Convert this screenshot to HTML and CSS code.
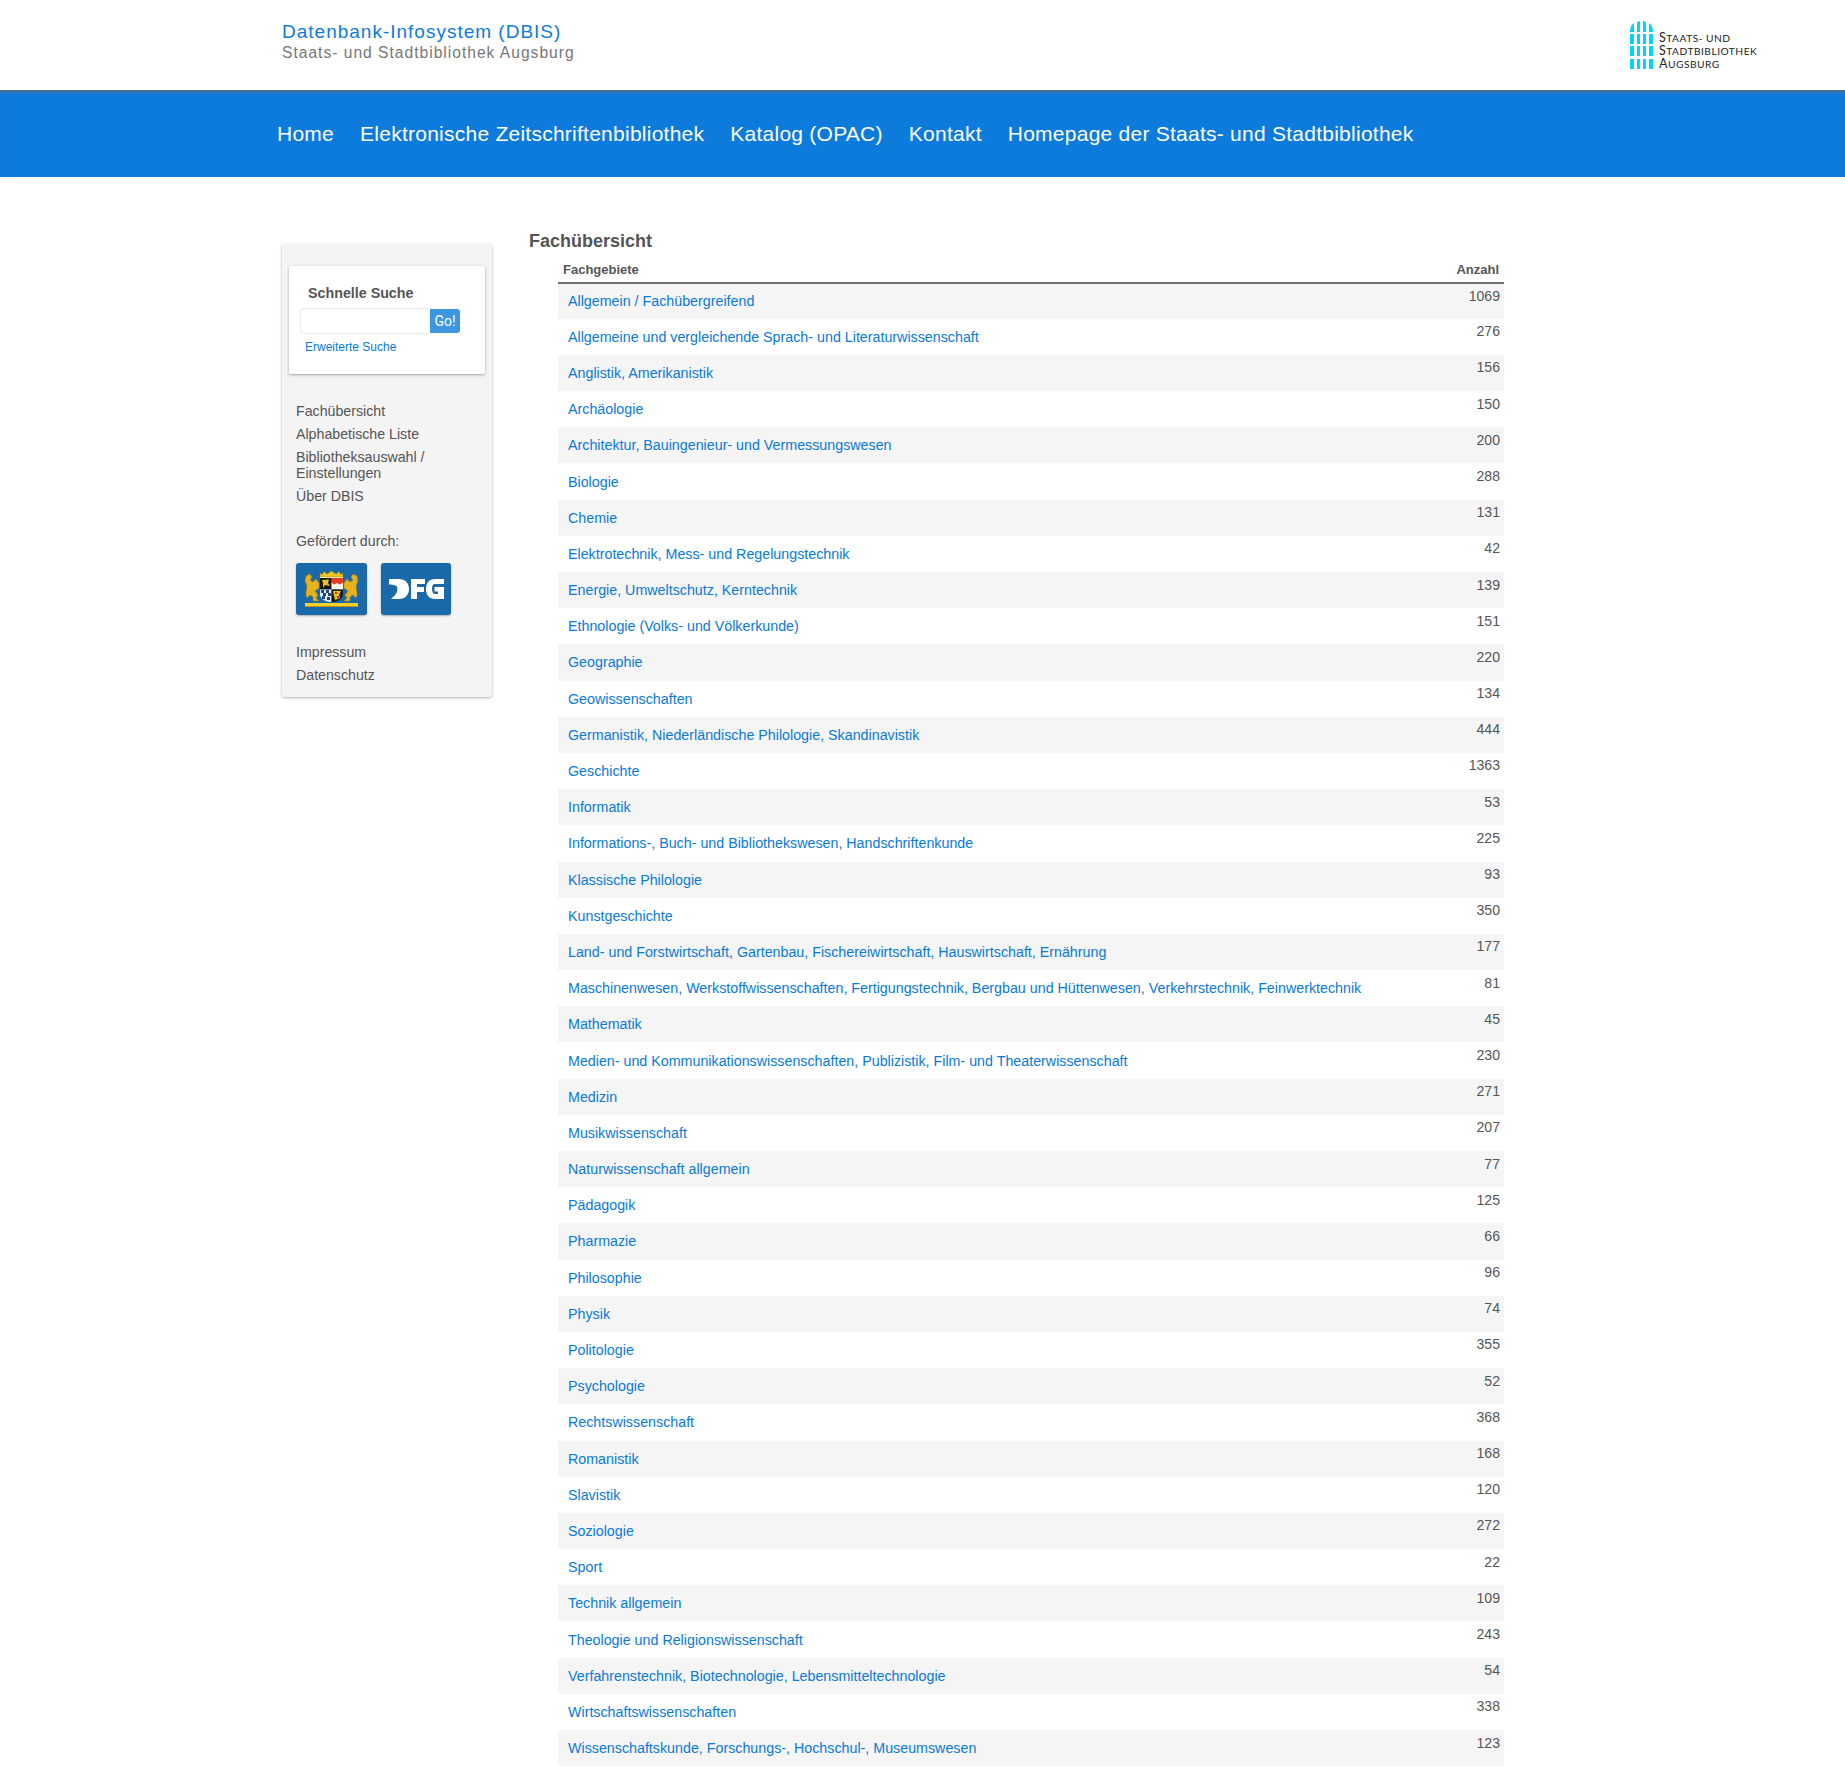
FILE: index.html
```html
<!DOCTYPE html>
<html>
<head>
    <title>Datenbank-Infosystem (DBIS)</title>
    <link rel="stylesheet" href="styles.css">
</head>
<body>
    <header class="top">
        <div class="brand">
            <div class="brand-title">Datenbank-Infosystem (DBIS)</div>
            <div class="brand-sub">Staats- und Stadtbibliothek Augsburg</div>
        </div>
        <div class="logo">
            <svg class="logo-mark" width="23" height="48" viewBox="0 0 23 48">
                <g fill="#00d4fa">
                    <path d="M0 11 C0 6 2 3 4 2 V11Z"/><path d="M7 11 V1 L10 0 V11Z"/><path d="M13 11 V0 L16 1 V11Z"/><path d="M19 2 C21 3 23 6 23 11 H19Z"/>
                    <rect x="0" y="13" width="4" height="10"/><rect x="7" y="13" width="3" height="10"/><rect x="13" y="13" width="3" height="10"/><rect x="19" y="13" width="4" height="10"/>
                    <rect x="0" y="25" width="4" height="10"/><rect x="7" y="25" width="3" height="10"/><rect x="13" y="25" width="3" height="10"/><rect x="19" y="25" width="4" height="10"/>
                    <rect x="0" y="38" width="4" height="10"/><rect x="7" y="38" width="3" height="10"/><rect x="13" y="38" width="3" height="10"/><rect x="19" y="38" width="4" height="10"/>
                </g>
            </svg>
            <div class="logo-text">
                <div class="logo-line">Staats- und</div>
                <div class="logo-line">Stadtbibliothek</div>
                <div class="logo-line">Augsburg</div>
            </div>
        </div>
    </header>

    <nav class="nav">
        <a href="#">Home</a>
        <a href="#">Elektronische Zeitschriftenbibliothek</a>
        <a href="#">Katalog (OPAC)</a>
        <a href="#">Kontakt</a>
        <a href="#">Homepage der Staats- und Stadtbibliothek</a>
    </nav>

    <div class="page">
        <aside class="sidebar">
            <div class="search-box">
                <div class="search-title">Schnelle Suche</div>
                <form class="search-form">
                    <input class="search-input" type="text">
                    <button class="search-btn" type="button">Go!</button>
                </form>
                <a class="search-more" href="#">Erweiterte Suche</a>
            </div>
            <ul class="side-menu">
                <li>Fachübersicht</li>
                <li>Alphabetische Liste</li>
                <li>Bibliotheksauswahl / Einstellungen</li>
                <li>Über DBIS</li>
            </ul>
            <div class="sponsor-label">Gefördert durch:</div>
            <div class="sponsors">
                <div class="sponsor">
                    <svg width="55" height="37" viewBox="0 0 55 37">
                        <!-- lions -->
                        <g fill="#e3b21c" stroke="#a8780f" stroke-width=".5">
                            <path d="M2 21 L3 15 L1 10 L2 5 L6 3 L8 6 L6 9 L9 11 L12 8 L15 12 L15 17 L11 20 L14 24 L12 27 L15 30 L9 30 L9 26 L6 24 L3 27 L2 24Z"/>
                            <path d="M53 21 L52 15 L54 10 L53 5 L49 3 L47 6 L49 9 L46 11 L43 8 L40 12 L40 17 L44 20 L41 24 L43 27 L40 30 L46 30 L46 26 L49 24 L52 27 L53 24Z"/>
                        </g>
                        <!-- crown -->
                        <path d="M16 6 V2 L18 3.5 L20 .5 L23 3 L27.5 0 L32 3 L35 .5 L37 3.5 L39 2 V6Z" fill="#ecc52a" stroke="#9a7010" stroke-width=".4"/>
                        <!-- shield -->
                        <rect x="16" y="6" width="23" height="1.5" fill="#f4e9b0"/>
                        <rect x="16" y="7" width="11.5" height="11.5" fill="#17170f"/>
                        <path d="M18 9 L25 8.5 L24 12 L26 15 L21 14 L19 17 L19 12Z" fill="#e6c222"/>
                        <rect x="27.5" y="7" width="11.5" height="4.5" fill="#e63a22"/>
                        <rect x="27.5" y="11.5" width="11.5" height="7" fill="#f6f3ea"/>
                        <path d="M27.5 11.5 L30 9 L33 11.5 L36 9 L39 11.5 L36 13.5 L33 12 L30 13.5Z" fill="#e63a22"/>
                        <path d="M16 18.5 H27.5 V31 C21 31 17 28 16 24Z" fill="#e6ecf4"/>
                        <path d="M17 19 h3 v3 h-3z M22 19 h3 v3 h-3z M19 22 h3 v3 h-3z M24 22 h3 v3 h-3z M18 25 h3 v3 h-3z M23 26 h3 v3 h-3z" fill="#24477f"/>
                        <path d="M27.5 18.5 H39 V24 C38 28 34 31 27.5 31Z" fill="#1c1a10"/>
                        <path d="M29 20 L37 20 L35 24 L36 27 L31 29 L30 25Z" fill="#e6c222"/>
                        <path d="M31 21 h2 v2 h-2z M33 25 h2 v2 h-2z" fill="#c4341c"/>
                        <!-- base -->
                        <rect x="1" y="32" width="53" height="3.5" fill="#f2d22a"/>
                        <rect x="1" y="35" width="53" height="1" fill="#b8901a"/>
                    </svg>
                </div>
                <div class="sponsor">
                    <svg width="55" height="20" viewBox="0 0 55 20">
                        <path fill="#fff" d="M0 0 H10 C16 0 20 4 20 10 C20 16 16 20 10 20 H2 C5 17 7 15 8 13 C8.6 11 8.5 9 8 7.5 C6 6 3 5.5 0 5.5Z"/>
                        <path fill="#fff" d="M22 0 H36 V5 H28 V8 H35 V13 H28 V20 H22Z"/>
                        <path fill="#fff" d="M55 0 V5 H46 C43.5 5 43 7.5 43 10 C43 12.5 44 15 46 15 H49 V12.5 H45.5 V8 H55 V20 H46 C40 20 37 16 37 10 C37 4 40 0 46 0Z"/>
                    </svg>
                </div>
            </div>
            <ul class="side-menu side-menu-end">
                <li>Impressum</li>
                <li>Datenschutz</li>
            </ul>
        </aside>

        <main class="content">
            <h1 class="heading">Fachübersicht</h1>
            <table class="subjects">
                <thead>
                    <tr><th>Fachgebiete</th><th class="num">Anzahl</th></tr>
                </thead>
                <tbody>
                    <tr><td><a href="#">Allgemein / Fachübergreifend</a></td><td class="num">1069</td></tr>
                    <tr><td><a href="#">Allgemeine und vergleichende Sprach- und Literaturwissenschaft</a></td><td class="num">276</td></tr>
                    <tr><td><a href="#">Anglistik, Amerikanistik</a></td><td class="num">156</td></tr>
                    <tr><td><a href="#">Archäologie</a></td><td class="num">150</td></tr>
                    <tr><td><a href="#">Architektur, Bauingenieur- und Vermessungswesen</a></td><td class="num">200</td></tr>
                    <tr><td><a href="#">Biologie</a></td><td class="num">288</td></tr>
                    <tr><td><a href="#">Chemie</a></td><td class="num">131</td></tr>
                    <tr><td><a href="#">Elektrotechnik, Mess- und Regelungstechnik</a></td><td class="num">42</td></tr>
                    <tr><td><a href="#">Energie, Umweltschutz, Kerntechnik</a></td><td class="num">139</td></tr>
                    <tr><td><a href="#">Ethnologie (Volks- und Völkerkunde)</a></td><td class="num">151</td></tr>
                    <tr><td><a href="#">Geographie</a></td><td class="num">220</td></tr>
                    <tr><td><a href="#">Geowissenschaften</a></td><td class="num">134</td></tr>
                    <tr><td><a href="#">Germanistik, Niederländische Philologie, Skandinavistik</a></td><td class="num">444</td></tr>
                    <tr><td><a href="#">Geschichte</a></td><td class="num">1363</td></tr>
                    <tr><td><a href="#">Informatik</a></td><td class="num">53</td></tr>
                    <tr><td><a href="#">Informations-, Buch- und Bibliothekswesen, Handschriftenkunde</a></td><td class="num">225</td></tr>
                    <tr><td><a href="#">Klassische Philologie</a></td><td class="num">93</td></tr>
                    <tr><td><a href="#">Kunstgeschichte</a></td><td class="num">350</td></tr>
                    <tr><td><a href="#">Land- und Forstwirtschaft, Gartenbau, Fischereiwirtschaft, Hauswirtschaft, Ernährung</a></td><td class="num">177</td></tr>
                    <tr><td><a href="#">Maschinenwesen, Werkstoffwissenschaften, Fertigungstechnik, Bergbau und Hüttenwesen, Verkehrstechnik, Feinwerktechnik</a></td><td class="num">81</td></tr>
                    <tr><td><a href="#">Mathematik</a></td><td class="num">45</td></tr>
                    <tr><td><a href="#">Medien- und Kommunikationswissenschaften, Publizistik, Film- und Theaterwissenschaft</a></td><td class="num">230</td></tr>
                    <tr><td><a href="#">Medizin</a></td><td class="num">271</td></tr>
                    <tr><td><a href="#">Musikwissenschaft</a></td><td class="num">207</td></tr>
                    <tr><td><a href="#">Naturwissenschaft allgemein</a></td><td class="num">77</td></tr>
                    <tr><td><a href="#">Pädagogik</a></td><td class="num">125</td></tr>
                    <tr><td><a href="#">Pharmazie</a></td><td class="num">66</td></tr>
                    <tr><td><a href="#">Philosophie</a></td><td class="num">96</td></tr>
                    <tr><td><a href="#">Physik</a></td><td class="num">74</td></tr>
                    <tr><td><a href="#">Politologie</a></td><td class="num">355</td></tr>
                    <tr><td><a href="#">Psychologie</a></td><td class="num">52</td></tr>
                    <tr><td><a href="#">Rechtswissenschaft</a></td><td class="num">368</td></tr>
                    <tr><td><a href="#">Romanistik</a></td><td class="num">168</td></tr>
                    <tr><td><a href="#">Slavistik</a></td><td class="num">120</td></tr>
                    <tr><td><a href="#">Soziologie</a></td><td class="num">272</td></tr>
                    <tr><td><a href="#">Sport</a></td><td class="num">22</td></tr>
                    <tr><td><a href="#">Technik allgemein</a></td><td class="num">109</td></tr>
                    <tr><td><a href="#">Theologie und Religionswissenschaft</a></td><td class="num">243</td></tr>
                    <tr><td><a href="#">Verfahrenstechnik, Biotechnologie, Lebensmitteltechnologie</a></td><td class="num">54</td></tr>
                    <tr><td><a href="#">Wirtschaftswissenschaften</a></td><td class="num">338</td></tr>
                    <tr><td><a href="#">Wissenschaftskunde, Forschungs-, Hochschul-, Museumswesen</a></td><td class="num">123</td></tr>
                </tbody>
            </table>
        </main>
    </div>
</body>
</html>
```

FILE: styles.css
```css
body {
    margin: 0;
    font-family: "Liberation Sans", Arial, sans-serif;
    font-size: 14.28px;
    color: #555;
    background: #fff;
}
a {
    color: #0a7ad8;
    text-decoration: none;
}
ul {
    list-style: none;
    margin: 0;
    padding: 0;
}

/* header */
.top {
    height: 90px;
    box-sizing: border-box;
    display: flex;
    justify-content: space-between;
    padding: 21px 85px 0 282px;
}
.brand-title {
    font-size: 19px;
    line-height: 22px;
    letter-spacing: 1px;
    color: #0d7bdb;
}
.brand-sub {
    font-size: 15.6px;
    line-height: 19px;
    letter-spacing: 1px;
    color: #777;
}
.logo {
    display: flex;
    gap: 6px;
    width: 130px;
}
.logo-text {
    padding-top: 10px;
    white-space: nowrap;
}
.logo-line {
    font-family: Lato, "Open Sans", sans-serif;
    font-size: 10.2px;
    line-height: 13px;
    height: 13px;
    text-transform: uppercase;
    letter-spacing: .5px;
    color: #222;
}
.logo-line::first-letter {
    font-size: 12.5px;
}

.nav {
    height: 87px;
    box-sizing: border-box;
    display: flex;
    align-items: center;
    gap: 26px;
    padding-left: 277px;
    background: #0d7bdb;
    box-shadow: inset 0 3px 3px -1px rgba(100, 105, 115, .85);
}
.nav a {
    color: #fff;
    font-size: 21px;
    letter-spacing: .25px;
}

/* page layout */
.page {
    display: flex;
    align-items: flex-start;
    padding: 53px 0 0 282px;
}
.sidebar {
    width: 210px;
    box-sizing: border-box;
    margin-top: 14px;
    padding: 22px 7px 0;
    height: 453px;
    background: #f4f4f4;
    border-radius: 3px;
    box-shadow: 0 1px 3px rgba(0, 0, 0, .3);
}
.search-box {
    height: 108px;
    box-sizing: border-box;
    padding: 17px 0 0 12px;
    background: #fff;
    border-radius: 2px;
    box-shadow: 0 1px 3px rgba(0, 0, 0, .35);
}
.search-title {
    font-weight: bold;
    padding-left: 7px;
    line-height: 20px;
    color: #555;
}
.search-form {
    display: flex;
    margin-top: 6px;
}
.search-input {
    width: 129px;
    height: 24px;
    box-sizing: border-box;
    border: 0;
    border-radius: 3px 0 0 3px;
    background: #fff;
    box-shadow: 0 0 2px rgba(0, 0, 0, .3);
    padding: 0;
}
.search-btn {
    width: 30px;
    height: 24px;
    padding: 0;
    border: 0;
    border-radius: 0 3px 3px 0;
    background: #3a97e0;
    color: #fff;
    font-family: Roboto, "Noto Sans", sans-serif;
    font-size: 14px;
}
.search-more {
    display: block;
    font-size: 12px;
    line-height: 14px;
    margin: 7px 0 0 4px;
}
.side-menu {
    margin-top: 26px;
    padding-left: 7px;
    font-size: 14.2px;
}
.side-menu li {
    line-height: 16px;
    padding: 3px 30px 4px 0;
    color: #555;
}
.sponsor-label {
    margin-top: 25px;
    padding-left: 7px;
    line-height: 16px;
    font-size: 14.2px;
}
.sponsors {
    display: flex;
    gap: 14px;
    margin: 14px 0 0 7px;
}
.sponsor {
    width: 71px;
    height: 52px;
    display: flex;
    align-items: center;
    justify-content: center;
    background: #1a69a9;
    border-radius: 3px;
    box-shadow: 0 1px 2px rgba(0, 0, 0, .3);
}
.sponsor + .sponsor {
    width: 70px;
}
.side-menu-end {
    margin-top: 26px;
}

/* main table */
.content {
    margin-left: 37px;
    width: 975px;
}
.heading {
    margin: 1px 0 0 0;
    font-size: 18px;
    line-height: 20px;
    color: #555;
}
.subjects {
    margin: 6px 0 0 29px;
    width: 946px;
    border-collapse: collapse;
}
.subjects th {
    font-size: 13px;
    text-align: left;
    height: 24.5px;
    padding: 0 5px;
    color: #555;
    border-bottom: 2px solid #6e6e6e;
}
.subjects td {
    height: 36.2px;
    padding: 0 4px 0 10px;
    box-sizing: border-box;
}
.subjects tbody tr:nth-child(odd) {
    background: #f5f5f5;
}
.subjects td.num {
    vertical-align: top;
    padding-top: 4.5px;
    text-align: right;
    font-size: 14.1px;
}
.subjects th.num {
    text-align: right;
}
```
